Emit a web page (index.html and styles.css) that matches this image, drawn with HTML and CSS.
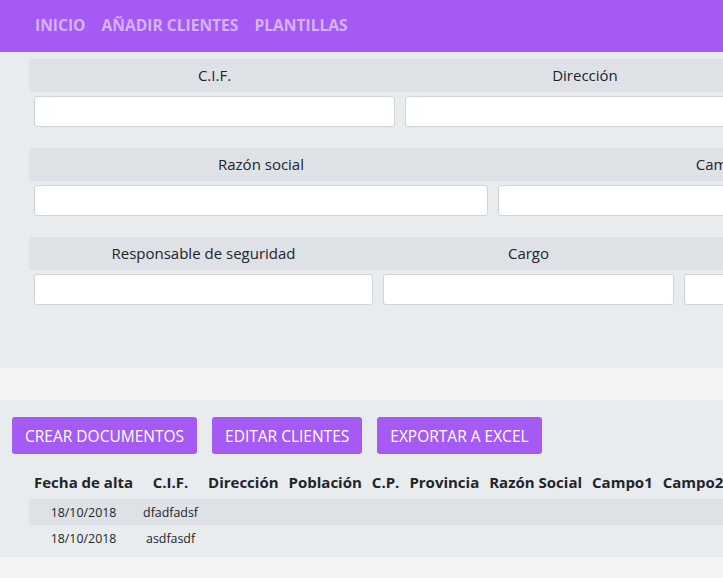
FILE: index.html
```html
<!DOCTYPE html>
<html lang="es">
<head>
<meta charset="utf-8">
<title>Clientes</title>
<link rel="stylesheet" href="styles.css">
</head>
<body>
<nav class="navbar">
  <a class="nav-link">INICIO</a>
  <a class="nav-link">AÑADIR CLIENTES</a>
  <a class="nav-link">PLANTILLAS</a>
</nav>

<section class="form-section">
  <div class="form-row">
    <div class="field w371"><div class="field-label">C.I.F.</div><input class="field-input" type="text"></div>
    <div class="field w370"><div class="field-label">Dirección</div><input class="field-input" type="text"></div>
    <div class="field w370"><div class="field-label">Población</div><input class="field-input" type="text"></div>
  </div>
  <div class="form-row">
    <div class="field w464"><div class="field-label">Razón social</div><input class="field-input" type="text"></div>
    <div class="field w464"><div class="field-label">Campo1</div><input class="field-input" type="text"></div>
  </div>
  <div class="form-row">
    <div class="field w349"><div class="field-label">Responsable de seguridad</div><input class="field-input" type="text"></div>
    <div class="field w301"><div class="field-label">Cargo</div><input class="field-input" type="text"></div>
    <div class="field w301"><div class="field-label">Teléfono</div><input class="field-input" type="text"></div>
  </div>
</section>

<div class="spacer"></div>

<section class="list-section">
  <div class="actions">
    <button class="btn">CREAR DOCUMENTOS</button>
    <button class="btn">EDITAR CLIENTES</button>
    <button class="btn">EXPORTAR A EXCEL</button>
  </div>
  <table class="clients">
    <thead>
      <tr>
        <th>Fecha de alta</th><th>C.I.F.</th><th>Dirección</th><th>Población</th><th>C.P.</th><th>Provincia</th><th>Razón Social</th><th>Campo1</th><th>Campo2</th><th>Campo3</th><th>Responsable</th>
      </tr>
    </thead>
    <tbody>
      <tr class="striped">
        <td>18/10/2018</td><td>dfadfadsf</td><td></td><td></td><td></td><td></td><td></td><td></td><td></td><td></td><td></td>
      </tr>
      <tr>
        <td>18/10/2018</td><td>asdfasdf</td><td></td><td></td><td></td><td></td><td></td><td></td><td></td><td></td><td></td>
      </tr>
    </tbody>
  </table>
</section>
<div class="footer-space"></div>
</body>
</html>
```

FILE: styles.css
```css
html, body {
  margin: 0;
  padding: 0;
}
body {
  background: #f4f4f4;
  font-family: "Open Sans", "Noto Sans", sans-serif;
  color: #212529;
  overflow: hidden;
  width: 723px;
}
.navbar {
  background: #a55af4;
  height: 52px;
  display: flex;
  align-items: center;
  gap: 16px;
  padding-left: 35px;
  padding-bottom: 2px;
  box-sizing: border-box;
}
.nav-link {
  color: #d6b3fb;
  font-weight: 700;
  font-size: 15.6px;
}
.form-section {
  background: #e9ecef;
  height: 316px;
  box-sizing: border-box;
  padding: 7px 0 0 29px;
  display: flex;
  flex-direction: column;
  gap: 21px;
  width: max-content;
  min-width: 723px;
}
.form-row {
  display: flex;
}
.field {
  display: flex;
  flex-direction: column;
  flex: none;
}
.w371 { width: 371px; }
.w370 { width: 370px; }
.w464 { width: 464px; }
.w349 { width: 349px; }
.w301 { width: 301px; }
.field-label {
  background: #dee2e6;
  height: 33px;
  line-height: 32px;
  text-align: center;
  font-size: 15px;
}
.field-input {
  margin: 4px 5px 0;
  height: 31px;
  box-sizing: border-box;
  border: 1px solid #ced4da;
  border-radius: 3px;
  background: #fff;
}
.spacer {
  height: 32px;
}
.list-section {
  background: #e9ecef;
  padding: 17px 0 0 0;
  height: 157px;
  box-sizing: border-box;
  width: max-content;
  min-width: 723px;
}
.actions {
  display: flex;
  gap: 15px;
  padding-left: 12px;
}
.btn {
  background: #a55af4;
  color: #fff;
  border: none;
  border-radius: 3px;
  height: 37px;
  padding: 0 13px;
  font-family: "Open Sans", "Noto Sans", sans-serif;
  font-size: 15.5px;
}
.clients {
  margin-left: 29px;
  margin-top: 8px;
  border-collapse: collapse;
}
.clients th {
  font-size: 15px;
  font-weight: 700;
  padding: 3px 5px 0;
  height: 37px;
  box-sizing: border-box;
  white-space: nowrap;
}
.clients td {
  font-size: 12.4px;
  height: 26px;
  padding: 0 5px;
  text-align: center;
  white-space: nowrap;
}
.clients tr.striped td {
  background: #dee2e6;
}
```
